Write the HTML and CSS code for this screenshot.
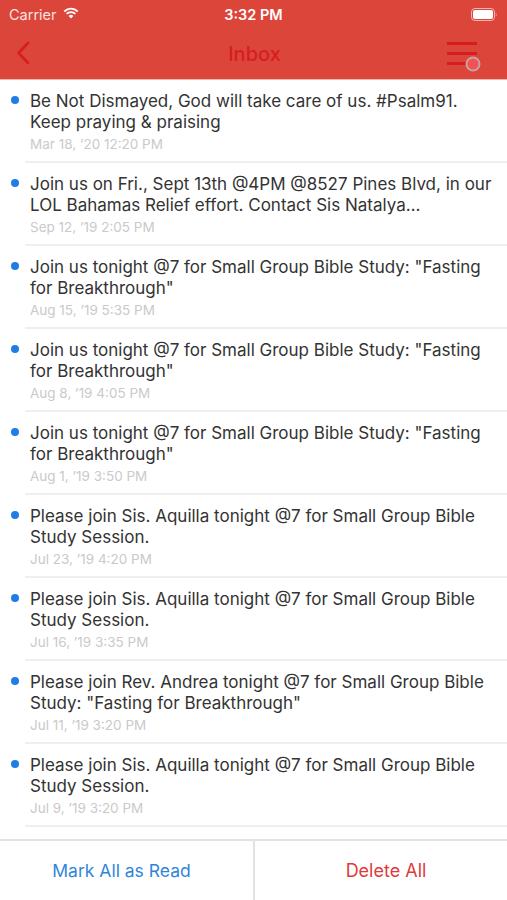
FILE: index.html
```html
<!DOCTYPE html>
<html>
<head>
<meta charset="utf-8">
<link rel="stylesheet" href="styles.css">
</head>
<body>
<div class="app">
  <header class="top">
    <div class="status">
      <div class="status-left">
        <span class="carrier">Carrier</span>
        <svg class="wifi" width="16" height="12" viewBox="0 0 16 12">
          <path d="M8 11.5 L5.6 8.9 A3.4 3.4 0 0 1 10.4 8.9 Z" fill="#fff"/>
          <path d="M3.6 6.9 A6.2 6.2 0 0 1 12.4 6.9" fill="none" stroke="#fff" stroke-width="1.8"/>
          <path d="M1.3 4.5 A9.4 9.4 0 0 1 14.7 4.5" fill="none" stroke="#fff" stroke-width="1.8"/>
        </svg>
      </div>
      <div class="time">3:32 PM</div>
      <div class="status-right">
        <svg width="27" height="13" viewBox="0 0 27 13">
          <rect x="0.5" y="0.5" width="23" height="12" rx="3.5" fill="none" stroke="#f3b3ad" stroke-width="1"/>
          <rect x="2" y="2" width="20" height="9" rx="2" fill="#fff"/>
          <path d="M24.8 4.5 Q26.3 6.5 24.8 8.5 Z" fill="#f3b3ad"/>
        </svg>
      </div>
    </div>
    <nav class="navbar">
      <svg class="back" width="14" height="24" viewBox="0 0 14 24">
        <path d="M12 2 L2.5 12 L12 22" fill="none" stroke="#d81d22" stroke-width="2.6" stroke-linecap="round" stroke-linejoin="round"/>
      </svg>
      <div class="title">Inbox</div>
      <svg class="menu" width="40" height="34" viewBox="0 0 40 34">
        <rect x="2" y="2" width="30" height="3" fill="#d81d22"/>
        <rect x="2" y="12" width="30" height="3" fill="#d81d22"/>
        <rect x="2" y="22" width="22" height="3" fill="#d81d22"/>
        <circle cx="28" cy="24" r="6.5" fill="#f15254" stroke="#c9a2a0" stroke-width="2"/>
      </svg>
    </nav>
  </header>

  <main class="list">
    <div class="row">
      <span class="dot"></span>
      <div class="content">
        <div class="msg">Be Not Dismayed, God will take care of us. #Psalm91. Keep praying &amp; praising</div>
        <div class="date">Mar 18, ’20 12:20 PM</div>
      </div>
    </div>
    <div class="row">
      <span class="dot"></span>
      <div class="content">
        <div class="msg">Join us on Fri., Sept 13th @4PM @8527 Pines Blvd, in our LOL Bahamas Relief effort. Contact Sis Natalya…</div>
        <div class="date">Sep 12, ’19 2:05 PM</div>
      </div>
    </div>
    <div class="row">
      <span class="dot"></span>
      <div class="content">
        <div class="msg">Join us tonight @7 for Small Group Bible Study: "Fasting for Breakthrough"</div>
        <div class="date">Aug 15, ’19 5:35 PM</div>
      </div>
    </div>
    <div class="row">
      <span class="dot"></span>
      <div class="content">
        <div class="msg">Join us tonight @7 for Small Group Bible Study: "Fasting for Breakthrough"</div>
        <div class="date">Aug 8, ’19 4:05 PM</div>
      </div>
    </div>
    <div class="row">
      <span class="dot"></span>
      <div class="content">
        <div class="msg">Join us tonight @7 for Small Group Bible Study: "Fasting for Breakthrough"</div>
        <div class="date">Aug 1, ’19 3:50 PM</div>
      </div>
    </div>
    <div class="row">
      <span class="dot"></span>
      <div class="content">
        <div class="msg">Please join Sis. Aquilla tonight @7 for Small Group Bible Study Session.</div>
        <div class="date">Jul 23, ’19 4:20 PM</div>
      </div>
    </div>
    <div class="row">
      <span class="dot"></span>
      <div class="content">
        <div class="msg">Please join Sis. Aquilla tonight @7 for Small Group Bible Study Session.</div>
        <div class="date">Jul 16, ’19 3:35 PM</div>
      </div>
    </div>
    <div class="row">
      <span class="dot"></span>
      <div class="content">
        <div class="msg">Please join Rev. Andrea tonight @7 for Small Group Bible Study: "Fasting for Breakthrough"</div>
        <div class="date">Jul 11, ’19 3:20 PM</div>
      </div>
    </div>
    <div class="row">
      <span class="dot"></span>
      <div class="content">
        <div class="msg">Please join Sis. Aquilla tonight @7 for Small Group Bible Study Session.</div>
        <div class="date">Jul 9, ’19 3:20 PM</div>
      </div>
    </div>
  </main>

  <footer class="toolbar">
    <div class="btn blue">Mark All as Read</div>
    <div class="btn red">Delete All</div>
  </footer>
</div>
</body>
</html>
```

FILE: styles.css
```css
* { box-sizing: border-box; }
html, body { margin: 0; padding: 0; }
body {
  font-family: Inter, "Liberation Sans", Arial, sans-serif;
  background: #fff;
  width: 507px;
  height: 900px;
  overflow: hidden;
}
.app {
  display: flex;
  flex-direction: column;
  height: 900px;
}
.top {
  background: #dc453a;
  height: 80px;
  flex: none;
  border-bottom: 1px solid #f0b5ae;
}
.status {
  height: 28px;
  display: flex;
  align-items: center;
  justify-content: space-between;
  padding: 0 9px 0 9px;
}
.status-left {
  display: flex;
  align-items: center;
  gap: 6px;
  width: 120px;
}
.carrier {
  color: #fbe3e0;
  font-size: 14.5px;
}
.wifi { margin-top: -2px; }
.time {
  color: #fff;
  font-size: 14.5px;
  font-weight: 600;
}
.status-right {
  width: 120px;
  display: flex;
  justify-content: flex-end;
}
.navbar {
  height: 51px;
  display: flex;
  align-items: center;
  justify-content: space-between;
  padding: 0 30px 0 16px;
}
.back { margin-top: -2px; }
.title {
  color: #d81d22;
  font-size: 20px;
  font-weight: 500;
  margin-left: 34px;
  margin-top: 0;
}
.menu { margin-top: 6px; margin-right: -8px; }
.list {
  flex: 1;
  overflow: hidden;
}
.row {
  display: flex;
  height: 83px;
  position: relative;
  padding: 11px 12px 0 11px;
}
.row::after {
  content: "";
  position: absolute;
  left: 25px;
  right: 0;
  bottom: 0;
  height: 2px;
  background: #efefef;
}
.dot {
  width: 8px;
  height: 8px;
  border-radius: 50%;
  background: #1e7ee6;
  flex: none;
  margin-top: 5px;
}
.content {
  margin-left: 11px;
}
.msg {
  font-size: 17px;
  line-height: 21px;
  color: #333;
  max-height: 42px;
  overflow: hidden;
}
.date {
  font-size: 13.5px;
  line-height: 18px;
  color: #cacaca;
  margin-top: 2px;
}
.toolbar {
  flex: none;
  height: 61px;
  border-top: 2px solid #e2e2e2;
  display: flex;
}
.btn {
  flex: 1;
  display: flex;
  align-items: center;
  justify-content: center;
  font-size: 17.5px;
}
.btn.blue {
  color: #2f86d9;
  border-right: 2px solid #e2e2e2;
  flex: 0 0 255px;
  padding-right: 10px;
}
.btn.red { color: #e03a3b; font-size: 18px; padding-left: 10px; }
```
